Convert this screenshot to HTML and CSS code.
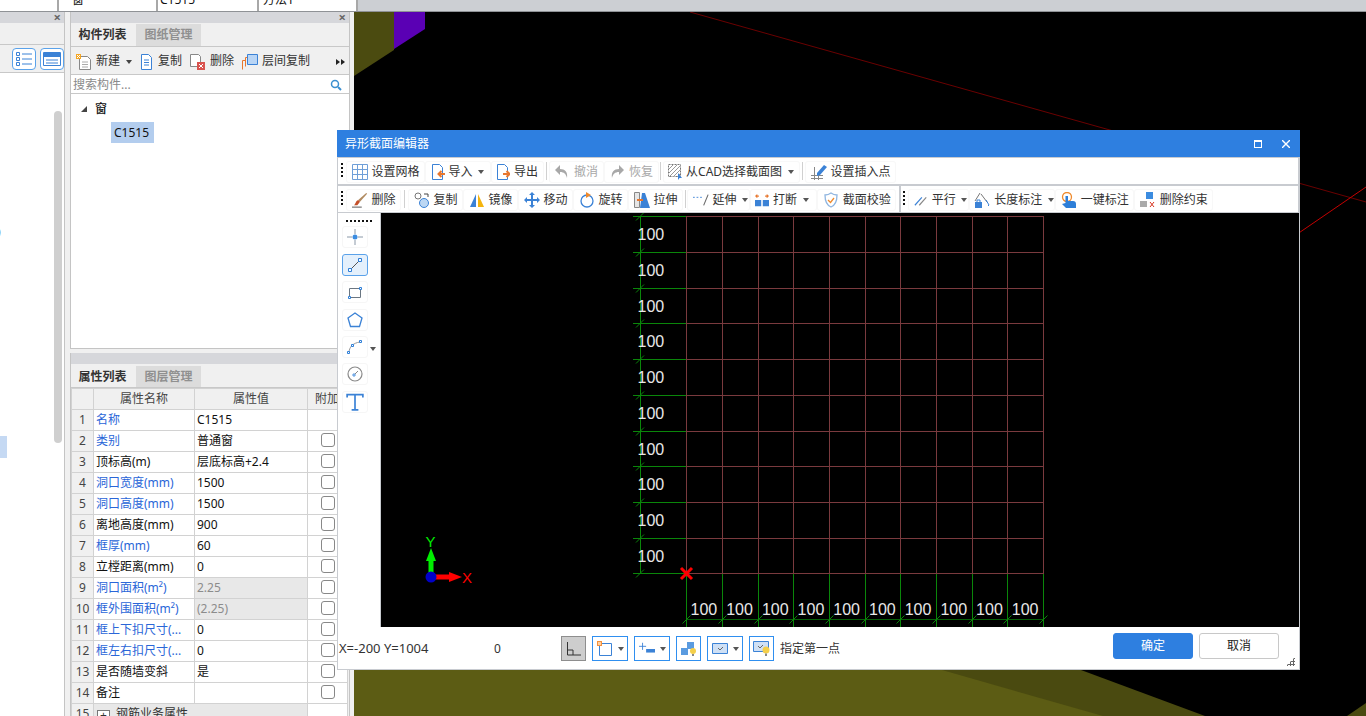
FILE: index.html
```html
<!DOCTYPE html>
<html lang="zh-CN">
<head>
<meta charset="utf-8">
<title>异形截面编辑器</title>
<link rel="stylesheet" href="styles.css">
</head>
<body>
<svg class="sprite" aria-hidden="true">
  <symbol id="i-grid" viewBox="0 0 16 16"><path d="M.5.5h15v15H.5zM5.5.5v15M10.5.5v15M.5 5.5h15M.5 10.5h15" fill="#fff" stroke="#6f9fd8"/></symbol>
  <symbol id="i-import" viewBox="0 0 14 16"><path d="M1.500.5h7l3 3v12h-10z" fill="#fff" stroke="#3b82d6"/><path d="M14 10H8M10.500 7l-3 3 3 3" fill="none" stroke="#e8772e" stroke-width="2"/></symbol>
  <symbol id="i-export" viewBox="0 0 14 16"><path d="M1.500.5h7l3 3v12h-10z" fill="#fff" stroke="#3b82d6"/><path d="M7 10h6M10.500 7l3 3-3 3" fill="none" stroke="#e8772e" stroke-width="2"/></symbol>
  <symbol id="i-undo" viewBox="0 0 16 16"><path d="M6 1 1 6l5 5V8c4 0 6 2 7 6 1-6-2-9-7-9z" fill="#a8a8a8"/></symbol>
  <symbol id="i-redo" viewBox="0 0 16 16"><path d="m10 1 5 5-5 5V8c-4 0-6 2-7 6C2 8 5 5 10 5z" fill="#a8a8a8"/></symbol>
  <symbol id="i-cad" viewBox="0 0 14 16"><path d="M.5.5h12v12H.5z" fill="#fff" stroke="#777" stroke-dasharray="2 1"/><path d="M1 5 5 1M1 9l8-8M1 13 13 1M5 13l8-8M9 13l4-4" stroke="#999"/><path d="M10 9v7l1.500-2H14z" fill="#3b82d6"/></symbol>
  <symbol id="i-insert" viewBox="0 0 16 16"><path d="M0 11.500h12M0 14.500h12M3.500 3v13M7.500 8v8" stroke="#888" fill="none"/><path d="m6 9 7-8 3 2-7 8-3 1z" fill="#3b82d6"/></symbol>
  <symbol id="i-erase" viewBox="0 0 18 18"><path d="M0 17h11" stroke="#444"/><path d="M7 9 16 1l1 1-8 9z" fill="#b08a60"/><path d="M7 9l2 2-3 4H2c2-1 2-5 5-6z" fill="#c4502a"/></symbol>
  <symbol id="i-copy" viewBox="0 0 16 16"><circle cx="4" cy="4" r="3" fill="#fff" stroke="#777"/><circle cx="10" cy="11" r="4.500" fill="#bcd7f3" stroke="#3b82d6"/><path d="M10 2h4v3" fill="none" stroke="#444"/></symbol>
  <symbol id="i-mirror" viewBox="0 0 16 16"><path d="M7 2v13H1z" fill="#3b82d6"/><path d="M9 2v13h6z" fill="#f5b50f"/></symbol>
  <symbol id="i-move" viewBox="0 0 16 16"><path d="M8 2v12M2 8h12" stroke="#3b82d6" stroke-width="2"/><path d="m8 0 3 3H5zM8 16l3-3H5zM0 8l3-3v6zM16 8l-3-3v6z" fill="#3b82d6"/></symbol>
  <symbol id="i-rotate" viewBox="0 0 16 16"><circle cx="8" cy="9" r="6" fill="none" stroke="#3b82d6" stroke-width="1.300"/><path d="M7 0v6l5-3z" fill="#ef8a2d"/></symbol>
  <symbol id="i-stretch" viewBox="0 0 16 16"><path d="M.5.5h5v15h-5z" fill="#e6e6e6" stroke="#888"/><path d="M8 1h3l5 15H6z" fill="#3b82d6"/><path d="M3 8h6" stroke="#e8772e" stroke-width="2"/></symbol>
  <symbol id="i-extend" viewBox="0 0 18 16"><path d="M0 5h2M4 5h2M8 5h2" stroke="#3b82d6"/><path d="M12 14 17 2" stroke="#666" stroke-width="1.200"/></symbol>
  <symbol id="i-break" viewBox="0 0 18 16"><path d="M0 8h8v8H0zM10 8h8v8h-8z" fill="#3b82d6"/><path d="M5 3H2M3 1 1 3l2 2M13 3h3M15 1l2 2-2 2" fill="none" stroke="#e8772e" stroke-width="1.400"/></symbol>
  <symbol id="i-shield" viewBox="0 0 16 16"><path d="M8 1c2 1.500 4 2 6 2 0 6-1 10-6 12C3 13 2 9 2 3c2 0 4-.5 6-2z" fill="#fff" stroke="#8fb5e0" stroke-width="1.300"/><path d="m5 8 2.500 2.500L11 6" fill="none" stroke="#ef8a2d" stroke-width="1.300"/></symbol>
  <symbol id="i-parallel" viewBox="0 0 16 16"><path d="M1 14 9 5" stroke="#3b82d6" stroke-width="1.300"/><path d="M6 14l8-9" stroke="#888" stroke-width="1.300"/></symbol>
  <symbol id="i-length" viewBox="0 0 16 16"><path d="M6 1 1 9M7 2l6 8" stroke="#777" fill="none"/><path d="M1 10h7v6H1z" fill="#3b82d6"/><path d="M3 10V8h3v2" fill="none" stroke="#3b82d6"/><path d="m12 8 3 5-1 1" fill="none" stroke="#3b82d6"/></symbol>
  <symbol id="i-onekey" viewBox="0 0 16 16"><circle cx="6" cy="5" r="4.500" fill="none" stroke="#ef8a2d" stroke-width="1.300"/><path d="M4.500 4h2.500v5h5c2 0 3 1 3 3v4H5l-4-4 3.500-1z" fill="#2e7fd8"/></symbol>
  <symbol id="i-delc" viewBox="0 0 16 16"><path d="M6 0h7v7H6z" fill="#3b8ce0"/><path d="M0 9h7v6H0z" fill="#aaa"/><path d="m10 10 4 5M14 10l-4 5" stroke="#d8321e"/></symbol>
  <symbol id="i-new" viewBox="0 0 16 16"><path d="M3.500 2.500h8l3 3v10h-11z" fill="#fff" stroke="#888"/><path d="M6 8h6M6 10.500h6M6 13h6" stroke="#aaa"/><path d="M0 0h5v5H0z" fill="#f5a623"/><path d="M1 1l3 3M4 1 1 4" stroke="#fff"/></symbol>
  <symbol id="i-pcopy" viewBox="0 0 14 16"><path d="M1.500.5h7l3 3v12h-10z" fill="#fff" stroke="#3b82d6"/><path d="M4 6h5M4 8.500h5M4 11h5" stroke="#3b82d6"/></symbol>
  <symbol id="i-pdel" viewBox="0 0 16 16"><path d="M.5.500h8l2 2v10H.5z" fill="#fff" stroke="#888"/><path d="M7 8h8v8H7z" fill="#d9534f"/><path d="m9 10 4 4M13 10l-4 4" stroke="#fff"/></symbol>
  <symbol id="i-floor" viewBox="0 0 16 16"><path d="M.5 15.500v-9h3M3.500 12.500v-9h3" fill="none" stroke="#e8772e"/><path d="M5.500.500h10v10h-10z" fill="#b9d5f5" stroke="#3b82d6"/></symbol>
  <symbol id="i-list" viewBox="0 0 18 18"><path d="M1.500 2.500h3v3h-3zM1.500 7.500h3v3h-3zM1.500 12.500h3v3h-3z" fill="none" stroke="#3b82d6"/><path d="M7 4h10M7 9h10M7 14h10" stroke="#3b82d6"/></symbol>
  <symbol id="i-win" viewBox="0 0 18 18"><path d="M.500 2.500h17v13H.500z" fill="#fff" stroke="#3b82d6"/><path d="M1 3h16v4H1z" fill="#3b82d6"/><path d="M3 10h12M3 13h12" stroke="#3b82d6"/></symbol>
  <symbol id="t-point" viewBox="0 0 16 16"><path d="M8 0v5M8 11v5M0 8h5M11 8h5" stroke="#8a98a8"/><circle cx="8" cy="8" r="2.500" fill="#3b8ce0"/></symbol>
  <symbol id="t-line" viewBox="0 0 16 16"><path d="m3 13 10-10" stroke="#555"/><path d="M1.500 11.500h3v3h-3zM11.500 1.500h3v3h-3z" fill="#fff" stroke="#2e7fd8"/></symbol>
  <symbol id="t-rect" viewBox="0 0 16 16"><path d="M2.500 4.500h11v9h-11z" fill="none" stroke="#6a7682"/><path d="M1.500 12.500h2v2h-2zM12.500 3.500h2v2h-2z" fill="#fff" stroke="#2e7fd8"/></symbol>
  <symbol id="t-pent" viewBox="0 0 16 16"><path d="m8 1 7 5-2.500 8.500h-9L1 6z" fill="none" stroke="#3b82d6" stroke-width="1.300"/></symbol>
  <symbol id="t-arc" viewBox="0 0 16 16"><path d="M2 14C2 8 6 4 13 3" fill="none" stroke="#999"/><path d="M.5 12.500h2v2h-2zM4.500 5.500h2v2h-2zM12.500 1.500h2v2h-2z" fill="#fff" stroke="#2e7fd8"/></symbol>
  <symbol id="t-circle" viewBox="0 0 16 16"><circle cx="8" cy="8" r="7" fill="none" stroke="#8a8a8a" stroke-width="1.200"/><path d="m8 8 3-3" stroke="#888"/><path d="M6 8h2v2H6z" fill="#fff" stroke="#2e7fd8" stroke-width=".8"/></symbol>
  <symbol id="t-text" viewBox="0 0 16 16"><path d="M1 4V1.500h14V4M8 1.500V15M5 15h6" fill="none" stroke="#3b82d6" stroke-width="1.500"/></symbol>
  <symbol id="f-ortho" viewBox="0 0 16 16"><path d="M1.500 1v13H15M1.500 9h5.500v5" fill="none" stroke="#333"/></symbol>
  <symbol id="f-snap" viewBox="0 0 16 16"><path d="M2.500 2.500h12v12h-12z" fill="#fff" stroke="#3b82d6"/><path d="M0 0h5v5H0z" fill="#f5913c"/><path d="M1 1h3v3H1z" fill="#ffd0a0"/></symbol>
  <symbol id="f-plus" viewBox="0 0 18 16"><path d="M4 1v8M0 5h8" stroke="#3b82d6"/><path d="M8 8h10v4H8z" fill="#3b82d6"/></symbol>
  <symbol id="f-bulb" viewBox="0 0 16 16"><path d="M6 1h7v7H6zM0 7h7v7H0z" fill="#5a9be0"/><circle cx="12" cy="10" r="3" fill="#f4cf4a"/><path d="M11 13h2v2h-2z" fill="#888"/></symbol>
  <symbol id="f-check" viewBox="0 0 16 12"><path d="M.500.500h15v10H.500z" fill="#cfe0f5" stroke="#3b82d6"/><path d="m6 5 2 2 3-3" fill="none" stroke="#666"/></symbol>
  <symbol id="f-checkb" viewBox="0 0 18 18"><path d="M.500 1.500h15v10H.500z" fill="#cfe0f5" stroke="#3b82d6"/><path d="m5 6 2 2 3-3" fill="none" stroke="#666"/><circle cx="13" cy="10" r="3.500" fill="#f4cf4a"/><path d="M12 13.500h2V16h-2z" fill="#888"/></symbol>
  <symbol id="i-search" viewBox="0 0 12 12"><circle cx="5" cy="5" r="3.500" fill="none" stroke="#3a8fd0" stroke-width="1.500"/><path d="m8 8 3 3" stroke="#3a8fd0" stroke-width="2"/></symbol>
</svg>

<div class="app">
  <div class="topbar">
    <div class="topcells">
      <span class="topcell cw1"></span>
      <span class="topcell cw2">窗</span>
      <span class="topcell cw3">C1515</span>
      <span class="topcell cw4">方法1</span>
    </div>
  </div>
  <div class="main">
    <section class="left">
      <div class="phead"><span class="pclose">×</span></div>
      <div class="ltabs"></div>
      <div class="ltools">
        <span class="lbtn"><svg class="i18"><use href="#i-list"/></svg></span>
        <span class="lbtn"><svg class="i18"><use href="#i-win"/></svg></span>
      </div>
      <div class="lbody">
        <div class="lparen">)</div>
        <div class="lsel"></div>
        <div class="lscroll"></div>
      </div>
    </section>

    <div class="midcol">
      <section class="panel ptop">
        <div class="phead"><span class="pclose">×</span></div>
        <div class="tabs">
          <span class="tab on">构件列表</span><span class="tab">图纸管理</span>
        </div>
        <div class="ctools">
          <span class="ct"><svg class="i16"><use href="#i-new"/></svg>新建<i class="caret dk"></i></span>
          <span class="ct"><svg class="i14"><use href="#i-pcopy"/></svg>复制</span>
          <span class="ct"><svg class="i16"><use href="#i-pdel"/></svg>删除</span>
          <span class="ct"><svg class="i16"><use href="#i-floor"/></svg>层间复制</span>
          <span class="more"><i></i><i></i></span>
        </div>
        <div class="search"><span class="hint">搜索构件...</span><svg class="i12"><use href="#i-search"/></svg></div>
        <div class="tree">
          <div class="tnode"><i class="tarrow"></i>窗</div>
          <div class="tleaf"><span>C1515</span></div>
        </div>
      </section>

      <section class="panel pbot">
        <div class="phead"></div>
        <div class="tabs">
          <span class="tab on">属性列表</span><span class="tab">图层管理</span>
        </div>
        <table class="props">
          <colgroup><col class="c1"><col class="c2"><col class="c3"><col class="c4"></colgroup>
          <thead><tr><th></th><th>属性名称</th><th>属性值</th><th class="add">附加</th></tr></thead>
          <tbody>
            <tr><th>1</th><td class="pub">名称</td><td>C1515</td><td></td></tr>
            <tr><th>2</th><td class="pub">类别</td><td>普通窗</td><td class="ck"><i></i></td></tr>
            <tr><th>3</th><td>顶标高(m)</td><td>层底标高+2.4</td><td class="ck"><i></i></td></tr>
            <tr><th>4</th><td class="pub">洞口宽度(mm)</td><td>1500</td><td class="ck"><i></i></td></tr>
            <tr><th>5</th><td class="pub">洞口高度(mm)</td><td>1500</td><td class="ck"><i></i></td></tr>
            <tr><th>6</th><td>离地高度(mm)</td><td>900</td><td class="ck"><i></i></td></tr>
            <tr><th>7</th><td class="pub">框厚(mm)</td><td>60</td><td class="ck"><i></i></td></tr>
            <tr><th>8</th><td>立樘距离(mm)</td><td>0</td><td class="ck"><i></i></td></tr>
            <tr><th>9</th><td class="pub">洞口面积(m²)</td><td class="ro">2.25</td><td class="ck"><i></i></td></tr>
            <tr><th>10</th><td class="pub">框外围面积(m²)</td><td class="ro">(2.25)</td><td class="ck"><i></i></td></tr>
            <tr><th>11</th><td class="pub">框上下扣尺寸(...</td><td>0</td><td class="ck"><i></i></td></tr>
            <tr><th>12</th><td class="pub">框左右扣尺寸(...</td><td>0</td><td class="ck"><i></i></td></tr>
            <tr><th>13</th><td>是否随墙变斜</td><td>是</td><td class="ck"><i></i></td></tr>
            <tr><th>14</th><td>备注</td><td></td><td class="ck"><i></i></td></tr>
            <tr><th>15</th><td colspan="2" class="group"><i class="plus">+</i>钢筋业务属性</td><td></td></tr>
          </tbody>
        </table>
      </section>
    </div>

    <div class="scene">
      <svg class="fill" viewBox="354 12 1012 704" preserveAspectRatio="none">
        <rect x="354" y="12" width="1012" height="704" fill="#000"/>
        <path d="M354 12h40v38l-40 26z" fill="#4b4b10"/>
        <path d="M394 12h31v17l-31 20z" fill="#5a00b4"/>
        <path d="M354 660h700l151 56H354z" fill="#4a4a10"/>
        <path d="M354 660h553l196 56H354z" fill="#5c5c14"/>
        <path d="M1366 703l-19 13h19z" fill="#4a4a10"/>
        <path d="M690 12 1366 202" stroke="#6a0000"/>
        <path d="M1290 239 1366 187" stroke="#c40000"/>
      </svg>
    </div>
  </div>

  <div class="dialog">
    <header class="dtitle">
      <span>异形截面编辑器</span>
      <span class="wbtns"><i class="wmax"></i><svg class="wx" viewBox="0 0 8 8"><path d="M0 0l8 8M8 0 0 8" stroke="#fff" stroke-width="1.400"/></svg></span>
    </header>
    <div class="dtool">
      <i class="grip"></i>
      <span class="it"><svg class="i16"><use href="#i-grid"/></svg>设置网格</span>
      <span class="it"><svg class="i14"><use href="#i-import"/></svg>导入<i class="caret"></i></span>
      <span class="it"><svg class="i14"><use href="#i-export"/></svg>导出</span>
      <i class="sep"></i>
      <span class="it off"><svg class="i16"><use href="#i-undo"/></svg>撤消</span>
      <span class="it off"><svg class="i16"><use href="#i-redo"/></svg>恢复</span>
      <i class="sep tight"></i>
      <span class="it"><svg class="i14"><use href="#i-cad"/></svg>从CAD选择截面图<i class="caret"></i></span>
      <i class="sep"></i>
      <span class="it"><svg class="i16"><use href="#i-insert"/></svg>设置插入点</span>
    </div>
    <div class="dtool second">
      <i class="grip"></i>
      <span class="it"><svg class="i16"><use href="#i-erase"/></svg>删除</span>
      <i class="sep wide"></i>
      <span class="it"><svg class="i16"><use href="#i-copy"/></svg>复制</span>
      <span class="it"><svg class="i16"><use href="#i-mirror"/></svg>镜像</span>
      <span class="it"><svg class="i16"><use href="#i-move"/></svg>移动</span>
      <span class="it"><svg class="i16"><use href="#i-rotate"/></svg>旋转</span>
      <span class="it"><svg class="i16"><use href="#i-stretch"/></svg>拉伸</span>
      <i class="sep tight"></i>
      <span class="it close"><svg class="i16"><use href="#i-extend"/></svg>延伸<i class="caret"></i></span>
      <span class="it far"><svg class="i14"><use href="#i-break"/></svg>打断<i class="caret"></i></span>
      <span class="it"><svg class="i16"><use href="#i-shield"/></svg>截面校验</span>
      <i class="tbreak"></i>
      <i class="grip"></i>
      <span class="it close"><svg class="i14"><use href="#i-parallel"/></svg>平行<i class="caret"></i></span>
      <span class="it close"><svg class="i16"><use href="#i-length"/></svg>长度标注<i class="caret"></i></span>
      <span class="it"><svg class="i16"><use href="#i-onekey"/></svg>一键标注</span>
      <span class="it"><svg class="i16"><use href="#i-delc"/></svg>删除约束</span>
    </div>
    <div class="dbody">
      <aside class="dside">
        <i class="dots"></i>
        <span class="tool"><svg class="i16"><use href="#t-point"/></svg></span>
        <span class="tool on"><svg class="i16"><use href="#t-line"/></svg></span>
        <span class="tool"><svg class="i16"><use href="#t-rect"/></svg></span>
        <span class="tool"><svg class="i16"><use href="#t-pent"/></svg></span>
        <span class="tool arc"><svg class="i16"><use href="#t-arc"/></svg><i class="caret mini"></i></span>
        <span class="tool"><svg class="i16"><use href="#t-circle"/></svg></span>
        <span class="tool"><svg class="i18"><use href="#t-text"/></svg></span>
      </aside>
      <div class="dcanvas">
        <svg class="fill" viewBox="381 213 918 414">
          <g stroke="#7a3a3e" fill="none">
            <path d="M686 216.500H1044M686 252.500H1044M686 288.500H1044M686 323.500H1044M686 359.500H1044M686 395.500H1044M686 431.500H1044M686 466.500H1044M686 502.500H1044M686 538.500H1044M686 573.500H1044"/>
            <path d="M686.500 216V574M722.500 216V574M758.500 216V574M793.500 216V574M829.500 216V574M865.500 216V574M900.500 216V574M936.500 216V574M972.500 216V574M1007.500 216V574M1043.500 216V574"/>
          </g>
          <g stroke="#0a860a" fill="none">
            <path d="M633 216.500H686M633 252.500H686M633 288.500H686M633 323.500H686M633 359.500H686M633 395.500H686M633 431.500H686M633 466.500H686M633 502.500H686M633 538.500H686M633 573.500H686"/>
            <path d="M640.500 216V574"/>
            <path d="M686.500 574V627M722.500 574V627M758.500 574V627M793.500 574V627M829.500 574V627M865.500 574V627M900.500 574V627M936.500 574V627M972.500 574V627M1007.500 574V627M1043.500 574V627"/>
            <path d="M686 619.500H1044" stroke="#066006"/>
            <path d="M636 220.500l8-8M636 256.500l8-8M636 292.500l8-8M636 327.500l8-8M636 363.500l8-8M636 399.500l8-8M636 435.500l8-8M636 470.500l8-8M636 506.500l8-8M636 542.500l8-8M636 577.500l8-8"/>
            <path d="M682.500 623.500l8-8M718.500 623.500l8-8M754.500 623.500l8-8M789.500 623.500l8-8M825.500 623.500l8-8M861.500 623.500l8-8M896.500 623.500l8-8M932.500 623.500l8-8M968.500 623.500l8-8M1003.500 623.500l8-8M1039.500 623.500l8-8"/>
          </g>
          <g class="dim">
            <text x="637.500" y="240">100</text><text x="637.500" y="276">100</text><text x="637.500" y="312">100</text><text x="637.500" y="347">100</text><text x="637.500" y="383">100</text><text x="637.500" y="419">100</text><text x="637.500" y="455">100</text><text x="637.500" y="490">100</text><text x="637.500" y="526">100</text><text x="637.500" y="562">100</text>
            <text x="690.500" y="615">100</text><text x="726.200" y="615">100</text><text x="761.900" y="615">100</text><text x="797.600" y="615">100</text><text x="833.300" y="615">100</text><text x="869" y="615">100</text><text x="904.700" y="615">100</text><text x="940.400" y="615">100</text><text x="976.100" y="615">100</text><text x="1011.800" y="615">100</text>
          </g>
          <path d="M681 568l11 11M692 568l-11 11" stroke="#ff0000" stroke-width="3"/>
          <path d="M431 577v-18" stroke="#00ee00" stroke-width="5"/>
          <path d="M431 548l5 13h-10z" fill="#00ee00"/>
          <path d="M431 577h20" stroke="#ff0000" stroke-width="5"/>
          <path d="M462 577l-13-5v10z" fill="#ff0000"/>
          <circle cx="431" cy="577" r="5.500" fill="#0000c8"/>
          <text class="ax" x="425.500" y="547" fill="#00ee00">Y</text>
          <text class="ax" x="462" y="583" fill="#ff0000">X</text>
        </svg>
      </div>
    </div>
    <footer class="dfoot">
      <span class="coord">X=-200 Y=1004</span>
      <span class="zero">0</span>
      <span class="fb gray"><svg class="i16"><use href="#f-ortho"/></svg></span>
      <span class="fb wide"><svg class="i16"><use href="#f-snap"/></svg><i class="caret"></i></span>
      <span class="fb wide"><svg class="i16"><use href="#f-plus"/></svg><i class="caret"></i></span>
      <span class="fb"><svg class="i16"><use href="#f-bulb"/></svg></span>
      <span class="fb wide"><svg class="i16"><use href="#f-check"/></svg><i class="caret"></i></span>
      <span class="fb"><svg class="i18"><use href="#f-checkb"/></svg></span>
      <span class="tip">指定第一点</span>
      <span class="btn pri">确定</span>
      <span class="btn">取消</span>
      <i class="resize"></i>
    </footer>
  </div>
</div>
</body>
</html>
```

FILE: styles.css
```css
* { box-sizing: border-box; }
html, body { margin: 0; padding: 0; }
body { width: 1366px; height: 716px; overflow: hidden; background: #000; font: 12px/1.2 "Noto Sans", "Noto Sans CJK SC", sans-serif; color: #222; }
i { font-style: normal; }
.sprite { display: none; }
.app { position: relative; width: 1366px; height: 716px; display: flex; flex-direction: column; overflow: hidden; }

.i12 { width: 12px; height: 12px; flex: none; }
.i14 { width: 14px; height: 16px; flex: none; }
.i16 { width: 16px; height: 16px; flex: none; }
.i18 { width: 18px; height: 18px; flex: none; }
.fill { display: block; width: 100%; height: 100%; }

.caret { display: inline-block; width: 0; height: 0; border: 3.5px solid transparent; border-top: 4px solid #555; border-bottom: 0; margin-left: 4px; flex: none; }
.caret.dk { border-top-color: #444; }
.caret.mini { position: absolute; right: -9px; top: 10px; margin: 0; }

.topbar { height: 12px; flex: none; background: #cccfd3; border-bottom: 1px solid #8f9296; overflow: hidden; }
.topcells { display: flex; width: 358px; height: 11px; background: #fff; overflow: hidden; }
.topcell { border-right: 2px solid #a8a8a8; height: 11px; line-height: 0; color: #111; font-size: 12px; flex: none; }
.cw1 { width: 59px; }
.cw2 { width: 99px; padding-left: 13px; }
.cw3 { width: 101px; padding-left: 2px; }
.cw4 { width: 99px; padding-left: 4px; }

.main { flex: 1; display: flex; background: #f0f0f0; min-height: 0; }
.left { width: 65px; flex: none; display: flex; flex-direction: column; background: #fff; border-right: 1px solid #c4c4c4; }
.phead { height: 11px; flex: none; background: #d6d7db; display: flex; justify-content: flex-end; align-items: center; padding-right: 3px; }
.pclose { font-size: 13px; line-height: 11px; color: #666; font-weight: 700; }
.ltabs { height: 22px; flex: none; background: #f0f0f0; border-bottom: 1px solid #c8c8c8; }
.ltools { height: 28px; flex: none; background: #f0f0f0; border-bottom: 1px solid #c8c8c8; display: flex; align-items: center; gap: 4px; padding-left: 12px; }
.lbtn { width: 24px; height: 22px; display: flex; align-items: center; justify-content: center; background: #fff; border: 1px solid #5aa2ea; border-radius: 4px; }
.lbody { position: relative; flex: 1; }
.lparen { padding-top: 152px; height: 363px; font-size: 12px; margin-left: -3px; }
.lsel { width: 7px; height: 22px; background: #c5d9f3; }
.lscroll { position: absolute; right: 2px; top: 38px; width: 8px; height: 332px; border-radius: 4px; background: #cfcfcf; }

.midcol { width: 280px; margin-left: 5px; margin-right: 4px; flex: none; display: flex; flex-direction: column; gap: 4px; }
.panel { display: flex; flex-direction: column; background: #f0f0f0; border: 1px solid #c4c4c4; border-top: 0; }
.ptop { height: 337px; flex: none; }
.pbot { flex: 1; min-height: 0; overflow: hidden; border-bottom: 0; }
.tabs { height: 23px; flex: none; display: flex; border-bottom: 1px solid #c8c8c8; margin-top: 1px; }
.pbot .tabs { margin-top: 2px; height: 22px; }
.tab { width: 65px; padding-top: 1px; display: flex; align-items: center; justify-content: center; background: #dcdcdc; color: #909090; font-weight: 700; }
.tab.on { background: #f0f0f0; color: #333; padding-right: 2px; }
.ctools { height: 28px; flex: none; display: flex; align-items: center; padding: 2px 0 0 5px; gap: 8px; border-bottom: 1px solid #c8c8c8; color: #333; }
.ct { display: flex; align-items: center; gap: 4px; }
.ct .caret { margin-left: 2px; }
.more { margin-left: auto; padding-right: 4px; display: flex; gap: 1px; }
.more i { width: 0; height: 0; border-style: solid; border-width: 3.5px 0 3.5px 4px; border-color: transparent transparent transparent #222; }
.search { height: 19px; flex: none; background: #fff; border-bottom: 1px solid #c8c8c8; display: flex; align-items: center; justify-content: space-between; padding: 2px 7px 0 2px; color: #8a8a8a; }
.hint { font-size: 12px; }
.tree { flex: 1; background: #fff; padding: 6px 0 0 10px; color: #111; }
.tnode { display: flex; align-items: center; gap: 8px; height: 18px; font-weight: 500; }
.tarrow { width: 0; height: 0; border-style: solid; border-width: 0 0 6px 6px; border-color: transparent transparent #444 transparent; }
.tleaf { margin: 4px 0 0 30px; }
.tleaf span { display: block; width: 43px; padding-left: 3px; height: 21px; line-height: 21px; background: #b3cdee; }

.props { table-layout: fixed; border-collapse: collapse; width: 276px; background: #fff; flex: none; color: #111; }
.c1 { width: 22px; } .c2 { width: 101px; } .c3 { width: 113px; } .c4 { width: 40px; }
.props tr { height: 21px; }
.props th, .props td { border: 1px solid #d2d2d2; padding: 0 2px; font-weight: 400; white-space: nowrap; overflow: hidden; height: 21px; line-height: 16px; }
.props thead th { background: #f0f0f0; text-align: center; color: #444; }
.props tbody th { background: #f0f0f0; text-align: center; color: #444; padding: 0; }
.props .add { text-align: left; padding-left: 7px; }
.pub { color: #2a66d8; }
.ro { background: #e8e8e8; color: #8c8c8c; }
.props .ck { padding: 0; }
.ck i { display: block; width: 14px; height: 14px; margin: -2px auto 0; border: 1px solid #888; border-radius: 3px; background: #fff; }
.group { background: #e8e8e8; color: #333; }
.plus { display: inline-block; width: 13px; height: 13px; line-height: 10px; border: 1px solid #777; background: #fff; text-align: center; margin: 0 6px 0 1px; vertical-align: -2px; }

.scene { flex: 1; min-width: 0; background: #000; }

.dialog { position: absolute; left: 337px; top: 130px; width: 963px; height: 540px; display: flex; flex-direction: column; background: #c8cbd0; border: 1px solid #c8cbd0; border-top: 0; }
.dtitle { height: 27px; flex: none; margin: 0 -1px; background: #2e7fe0; color: #fff; display: flex; align-items: center; justify-content: space-between; padding: 2px 10px 0 8px; font-size: 12px; }
.wbtns { display: flex; align-items: center; gap: 20px; margin-top: -1px; }
.wmax { width: 8px; height: 8px; border: 1px solid #fff; border-top-width: 2px; }
.wx { width: 8px; height: 8px; display: block; }
.dtool { height: 26px; flex: none; margin: 1px 1px 0 0; background: #fff; display: flex; align-items: center; padding: 2px 0 0 3px; color: #333; }
.dtool.second { margin-top: 2px; }
.grip { width: 2px; height: 16px; margin: -2px 3px 0 0; flex: none; background: repeating-linear-gradient(#111 0 2px, transparent 2px 4px); }
.it { display: flex; align-items: center; gap: 4px; padding: 0 5.5px; height: 22px; border-radius: 3px; box-shadow: inset 0 0 0 1px #f8f8f8; white-space: nowrap; }
.it.close { padding-right: 1.5px; }
.it .caret { margin-left: 1.5px; margin-right: 1px; }
.it.close .caret { margin-right: 0; }
.it.far .caret { margin-right: 3px; }
.off { color: #a8a8a8; }
.sep { width: 1px; height: 18px; margin: -2px 2px 0; background: #d0d0d0; flex: none; }
.sep.wide { margin-left: 3px; margin-right: 3px; }
.sep.tight { margin-left: 1.5px; margin-right: 1.5px; }
.tbreak { width: 2px; height: 26px; background: #c8cbd0; flex: none; margin: -2px 2px 0 3px; }

.dbody { flex: 1; min-height: 0; margin-top: 1px; display: flex; background: #fff; }
.dside { width: 43px; flex: none; background: #fff; display: flex; flex-direction: column; align-items: flex-start; padding: 7px 0 0 4px; gap: 5.400px; border-right: 1px solid #c8cbd0; }
.dots { width: 26px; height: 2px; margin: 0 0 -1px 4px; background: repeating-linear-gradient(90deg, #111 0 2px, transparent 2px 4px); }
.tool { position: relative; width: 26px; height: 22px; flex: none; display: flex; align-items: center; justify-content: center; border: 1px solid #f6f6f6; border-radius: 3px; }
.tool.on { background: #e4f0fc; border-color: #5aa2ea; }
.dcanvas { flex: 1; min-width: 0; background: #000; }
.dim text { font: 16px "Liberation Sans", sans-serif; fill: #e8e8e8; }
.ax { font: 15px "Liberation Sans", sans-serif; }

.dfoot { position: relative; height: 42px; flex: none; background: #fff; display: flex; align-items: center; padding-left: 1px; gap: 6px; color: #333; }
.coord { width: 149px; font-size: 13px; white-space: nowrap; margin-top: 2px; }
.zero { width: 61px; margin-top: 2px; }
.fb { width: 25px; height: 25px; margin-top: 1px; display: flex; align-items: center; justify-content: center; border: 1px solid #2f8ff0; background: #fff; flex: none; }
.fb.wide { width: 36px; justify-content: flex-start; padding-left: 4px; }
.fb.wide .caret { margin-left: 5px; }
.fb.gray { background: #cdcdcd; border-color: #8e8e8e; }
.tip { margin: 2px auto 0 0; white-space: nowrap; }
.btn { width: 80px; height: 26px; margin-top: -4px; padding-top: 1px; display: flex; align-items: center; justify-content: center; border: 1px solid #c8c8c8; border-radius: 3px; background: #fff; color: #222; flex: none; }
.btn.pri { background: #2e7fe0; border-color: #2e7fe0; color: #fff; }
.btn + .btn { margin-right: 20px; }
.resize { position: absolute; right: 4px; bottom: 3px; width: 9px; height: 9px; background: radial-gradient(circle, #666 1px, transparent 1.200px) 0 0 / 3px 3px; clip-path: polygon(100% 0, 100% 100%, 0 100%); }
```
